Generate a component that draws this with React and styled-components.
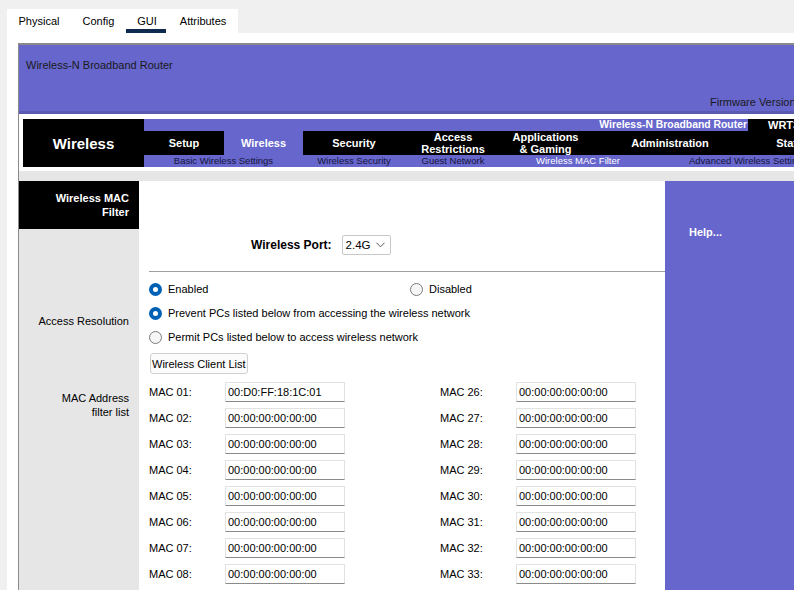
import React from 'react';
import styled, { createGlobalStyle, css } from 'styled-components';

const GlobalStyle = createGlobalStyle`
    html, body {
        margin: 0;
        padding: 0;
        background: #f0f0f0;
        overflow: hidden;
    }
    body {
        font-family: "Liberation Sans", Arial, sans-serif;
        font-size: 11px;
        color: #000;
    }
`;

const PURPLE = '#6666cc';

const Window = styled.div`
    width: 794px;
    height: 590px;
    overflow: hidden;
    padding: 9px 0 0 7px;
    box-sizing: border-box;
    display: flex;
    flex-direction: column;
`;

const TabBar = styled.div`
    display: flex;
    flex-shrink: 0;
    align-self: flex-start;
    background: #fff;
    height: 24px;
`;

const Tab = styled.div`
    position: relative;
    padding: 0 11.5px;
    line-height: 24px;
    font-size: 11px;
    &::after {
        content: '';
        display: ${(p) => (p.$active ? 'block' : 'none')};
        position: absolute;
        left: 0;
        right: 2px;
        bottom: 0;
        height: 4px;
        background: #0f2a4f;
    }
`;

const Panel = styled.div`
    flex: 1;
    min-height: 0;
    background: #fff;
    padding: 10px 0 0 11px;
    overflow: hidden;
`;

const RouterPage = styled.div`
    width: 880px;
    min-height: 100%;
    border-top: 2px solid #8a8a8a;
    border-left: 1px solid #8a8a8a;
    display: flex;
    flex-direction: column;
`;

const Header = styled.div`
    flex-shrink: 0;
    background: ${PURPLE};
    height: 66px;
    border-bottom: 3px solid #5a5ab0;
    display: flex;
    flex-direction: column;
    justify-content: space-between;
    color: #1a1a1a;
    line-height: 13px;
`;

const Product = styled.div`
    padding: 14px 0 0 7px;
`;

const Firmware = styled.div`
    padding: 0 0 2px 691px;
    white-space: nowrap;
`;

const NavArea = styled.div`
    flex-shrink: 0;
    display: flex;
    background: #fff;
    padding: 5px 0 4px 4px;
`;

const Brand = styled.div`
    width: 121px;
    height: 48px;
    flex-shrink: 0;
    background: #000;
    color: #fff;
    font-weight: bold;
    font-size: 15px;
    display: flex;
    align-items: center;
    justify-content: center;
`;

const NavRight = styled.div`
    flex: 1;
    display: flex;
    flex-direction: column;
`;

const TopBand = styled.div`
    display: flex;
    height: 12px;
    line-height: 12px;
    font-weight: bold;
    color: #fff;
`;

const TitleCell = styled.div`
    width: 603px;
    background: ${PURPLE};
    text-align: right;
    padding-right: 1px;
    font-size: 10.4px;
`;

const ModelCell = styled.div`
    flex: 1;
    background: #000;
    padding-left: 20px;
`;

const TabRow = styled.div`
    display: flex;
    height: 24px;
    background: #000;
`;

const NavTab = styled.div`
    width: ${(p) => p.$w}px;
    flex-shrink: 0;
    background: ${(p) => (p.$active ? PURPLE : '#000')};
    color: #fff;
    font-weight: bold;
    line-height: 12px;
    text-align: center;
    display: flex;
    align-items: center;
    justify-content: center;
`;

const SubRow = styled.div`
    display: flex;
    height: 12px;
    background: ${PURPLE};
`;

const SubItem = styled.div`
    width: ${(p) => p.$w}px;
    flex-shrink: 0;
    font-size: 9.5px;
    line-height: 12px;
    white-space: nowrap;
    text-align: ${(p) => (p.$left ? 'left' : 'center')};
    padding-left: ${(p) => (p.$left ? 34 : 0)}px;
    color: ${(p) => (p.$active ? '#fff' : '#15153a')};
`;

const GrayBand = styled.div`
    flex-shrink: 0;
    height: 10px;
    background: #e6e6e6;
`;

const ContentRow = styled.div`
    flex: 1;
    display: flex;
`;

const SideCol = styled.div`
    width: 120px;
    flex-shrink: 0;
    background: #e6e6e6;
`;

const SideHeader = styled.div`
    height: 48px;
    box-sizing: border-box;
    background: #000;
    color: #fff;
    font-weight: bold;
    text-align: right;
    padding: 10px 10px 0 0;
    line-height: 14px;
`;

const SideLabel = styled.div`
    text-align: right;
    padding-right: 10px;
    line-height: 14px;
    margin-top: ${(p) => p.$top}px;
`;

const Main = styled.div`
    width: 516px;
    flex-shrink: 0;
    background: #fff;
    padding-left: 10px;
`;

const PortRow = styled.div`
    display: flex;
    align-items: center;
    gap: 10px;
    margin-top: 54px;
    padding-left: 102px;
`;

const PortLabel = styled.span`
    font-weight: bold;
    font-size: 12px;
`;

const Select = styled.div`
    width: 49px;
    height: 20px;
    box-sizing: border-box;
    border: 1px solid #c8c8c8;
    border-radius: 2px;
    display: flex;
    align-items: center;
    justify-content: space-between;
    padding: 0 5px 0 3px;
    font-size: 11.5px;
`;

const Divider = styled.div`
    height: 1px;
    background: #a0a0a0;
    margin-top: 16px;
`;

const RadioGroup = styled.div`
    margin-top: 5px;
`;

const RadioRow = styled.div`
    display: grid;
    grid-template-columns: ${(p) => (p.$split ? '261px auto' : 'auto')};
    height: 24px;
    align-items: center;
`;

const RadioItem = styled.label`
    display: flex;
    align-items: center;
    gap: 6px;
`;

const RadioDot = styled.span`
    width: 13px;
    height: 13px;
    border-radius: 50%;
    box-sizing: border-box;
    flex-shrink: 0;
    ${(p) =>
        p.$checked
            ? css`
                  background: #fff;
                  border: 4px solid #0060b6;
              `
            : css`
                  background: #f6f6f6;
                  border: 1px solid #7a7a7a;
              `}
`;

const ClientButton = styled.button`
    margin: 4px 0 0 1px;
    height: 21px;
    padding: 0 1px;
    font-family: inherit;
    font-size: 11px;
    background: #fbfbfb;
    border: 1px solid #d0d0d0;
    border-radius: 3px;
    color: #000;
`;

const MacGrid = styled.div`
    display: grid;
    grid-template-columns: 76px 120px 95px 76px 120px;
    grid-auto-rows: 20px;
    row-gap: 6px;
    margin-top: 8px;
    align-items: center;
`;

const MacInput = styled.input`
    height: 20px;
    width: 120px;
    box-sizing: border-box;
    border: 1px solid #e2e2e2;
    border-bottom-color: #8a8a8a;
    padding: 0 2px;
    font-family: inherit;
    font-size: 11px;
    color: #000;
    outline: none;
`;

const Help = styled.div`
    flex: 1;
    background: ${PURPLE};
    color: #fff;
    font-weight: bold;
    padding: 45px 0 0 24px;
`;

const tabs = ['Physical', 'Config', 'GUI', 'Attributes'];

const navTabs = [
    { label: 'Setup', w: 80 },
    { label: 'Wireless', w: 79, active: true },
    { label: 'Security', w: 102 },
    { label: ['Access', 'Restrictions'], w: 96 },
    { label: ['Applications', '& Gaming'], w: 89 },
    { label: 'Administration', w: 160 },
    { label: 'Status', w: 86 },
];

const subItems = [
    { label: 'Basic Wireless Settings', w: 159 },
    { label: 'Wireless Security', w: 102 },
    { label: 'Guest Network', w: 96 },
    { label: 'Wireless MAC Filter', w: 154, active: true },
    { label: 'Advanced Wireless Settings', w: 200, left: true },
];

const pad = (n) => String(n).padStart(2, '0');

const Radio = ({ checked, children }) => (
    <RadioItem>
        <RadioDot $checked={checked} />
        {children}
    </RadioItem>
);

const App = () => {
    const rows = Array.from({ length: 9 }, (_, i) => i + 1);

    return (
        <>
            <GlobalStyle />
            <Window>
                <TabBar>
                    {tabs.map((t) => (
                        <Tab key={t} $active={t === 'GUI'}>
                            {t}
                        </Tab>
                    ))}
                </TabBar>
                <Panel>
                    <RouterPage>
                        <Header>
                            <Product>Wireless-N Broadband Router</Product>
                            <Firmware>Firmware Version: v0.93.3</Firmware>
                        </Header>
                        <NavArea>
                            <Brand>Wireless</Brand>
                            <NavRight>
                                <TopBand>
                                    <TitleCell>Wireless-N Broadband Router</TitleCell>
                                    <ModelCell>WRT300N</ModelCell>
                                </TopBand>
                                <TabRow>
                                    {navTabs.map((t, i) => (
                                        <NavTab key={i} $w={t.w} $active={t.active}>
                                            {Array.isArray(t.label) ? (
                                                <span>
                                                    {t.label[0]}
                                                    <br />
                                                    {t.label[1]}
                                                </span>
                                            ) : (
                                                t.label
                                            )}
                                        </NavTab>
                                    ))}
                                </TabRow>
                                <SubRow>
                                    {subItems.map((s) => (
                                        <SubItem
                                            key={s.label}
                                            $w={s.w}
                                            $active={s.active}
                                            $left={s.left}
                                        >
                                            {s.label}
                                        </SubItem>
                                    ))}
                                </SubRow>
                            </NavRight>
                        </NavArea>
                        <GrayBand />
                        <ContentRow>
                            <SideCol>
                                <SideHeader>
                                    Wireless MAC
                                    <br />
                                    Filter
                                </SideHeader>
                                <SideLabel $top={85}>Access Resolution</SideLabel>
                                <SideLabel $top={63}>
                                    MAC Address
                                    <br />
                                    filter list
                                </SideLabel>
                            </SideCol>
                            <Main>
                                <PortRow>
                                    <PortLabel>Wireless Port:</PortLabel>
                                    <Select>
                                        <span>2.4G</span>
                                        <svg width="9" height="6" viewBox="0 0 9 6">
                                            <path
                                                d="M0.5 0.8 L4.5 4.8 L8.5 0.8"
                                                fill="none"
                                                stroke="#555"
                                                strokeWidth="1"
                                            />
                                        </svg>
                                    </Select>
                                </PortRow>
                                <Divider />
                                <RadioGroup>
                                    <RadioRow $split>
                                        <Radio checked>Enabled</Radio>
                                        <Radio>Disabled</Radio>
                                    </RadioRow>
                                    <RadioRow>
                                        <Radio checked>
                                            Prevent PCs listed below from accessing the
                                            wireless network
                                        </Radio>
                                    </RadioRow>
                                    <RadioRow>
                                        <Radio>
                                            Permit PCs listed below to access wireless
                                            network
                                        </Radio>
                                    </RadioRow>
                                </RadioGroup>
                                <ClientButton>Wireless Client List</ClientButton>
                                <MacGrid>
                                    {rows.map((n) => (
                                        <React.Fragment key={n}>
                                            <span>MAC {pad(n)}:</span>
                                            <MacInput
                                                readOnly
                                                value={
                                                    n === 1
                                                        ? '00:D0:FF:18:1C:01'
                                                        : '00:00:00:00:00:00'
                                                }
                                            />
                                            <span />
                                            <span>MAC {pad(n + 25)}:</span>
                                            <MacInput readOnly value="00:00:00:00:00:00" />
                                        </React.Fragment>
                                    ))}
                                </MacGrid>
                            </Main>
                            <Help>Help...</Help>
                        </ContentRow>
                    </RouterPage>
                </Panel>
            </Window>
        </>
    );
};

export default App;
